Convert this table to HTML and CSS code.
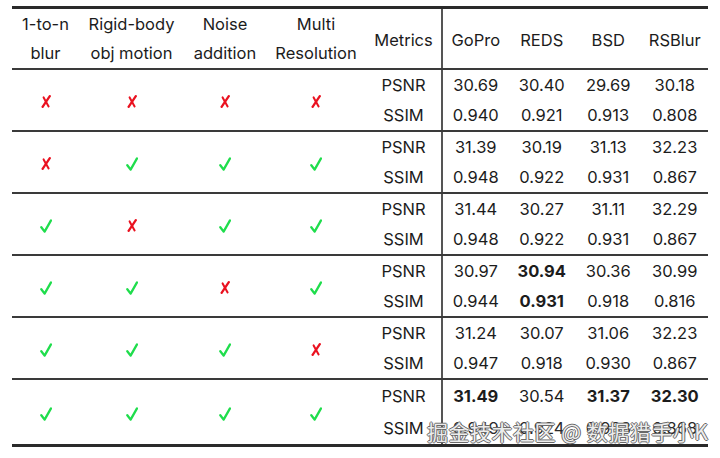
FILE: index.html
```html
<!DOCTYPE html>
<html lang="en">
<head>
<meta charset="utf-8">
<title>Ablation table</title>
<link rel="stylesheet" href="styles.css">
</head>
<body>
<svg class="defs" width="0" height="0" aria-hidden="true">
  <symbol id="yes" viewBox="0 0 12 14">
    <path d="M1.3 8.2 L4.6 12.6 L11 1.4" fill="none" stroke="currentColor" stroke-width="2.3" stroke-linecap="round" stroke-linejoin="round"/>
  </symbol>
  <symbol id="no" viewBox="0 0 10 13">
    <path d="M8.8 1.2 L1.6 11.8" fill="none" stroke="currentColor" stroke-width="2.3" stroke-linecap="round"/>
    <path d="M2.6 2.4 L7.6 11.4" fill="none" stroke="currentColor" stroke-width="2" stroke-linecap="round"/>
  </symbol>
</svg>
<div class="page">
  <table class="results">
    <colgroup>
      <col class="c1"><col class="c2"><col class="c3"><col class="c4"><col class="cm">
      <col class="cd"><col class="cd"><col class="cd"><col class="cd">
    </colgroup>
    <thead>
      <tr class="head">
        <th>1-to-n<br>blur</th>
        <th>Rigid-body<br>obj motion</th>
        <th>Noise<br>addition</th>
        <th>Multi<br>Resolution</th>
        <th class="metric low">Metrics</th>
        <th class="low">GoPro</th><th class="low">REDS</th><th class="low">BSD</th><th class="low">RSBlur</th>
      </tr>
    </thead>
    <tbody>
      <tr class="top">
        <td rowspan="2"><svg class="mark no"><use href="#no"/></svg></td>
        <td rowspan="2"><svg class="mark no"><use href="#no"/></svg></td>
        <td rowspan="2"><svg class="mark no"><use href="#no"/></svg></td>
        <td rowspan="2"><svg class="mark no"><use href="#no"/></svg></td>
        <td class="metric">PSNR</td><td>30.69</td><td>30.40</td><td>29.69</td><td>30.18</td></tr>
      <tr class="bot"><td class="metric">SSIM</td><td>0.940</td><td>0.921</td><td>0.913</td><td>0.808</td></tr>

      <tr class="top">
        <td rowspan="2"><svg class="mark no"><use href="#no"/></svg></td>
        <td rowspan="2"><svg class="mark yes"><use href="#yes"/></svg></td>
        <td rowspan="2"><svg class="mark yes"><use href="#yes"/></svg></td>
        <td rowspan="2"><svg class="mark yes"><use href="#yes"/></svg></td>
        <td class="metric">PSNR</td><td>31.39</td><td>30.19</td><td>31.13</td><td>32.23</td></tr>
      <tr class="bot"><td class="metric">SSIM</td><td>0.948</td><td>0.922</td><td>0.931</td><td>0.867</td></tr>

      <tr class="top">
        <td rowspan="2"><svg class="mark yes"><use href="#yes"/></svg></td>
        <td rowspan="2"><svg class="mark no"><use href="#no"/></svg></td>
        <td rowspan="2"><svg class="mark yes"><use href="#yes"/></svg></td>
        <td rowspan="2"><svg class="mark yes"><use href="#yes"/></svg></td>
        <td class="metric">PSNR</td><td>31.44</td><td>30.27</td><td>31.11</td><td>32.29</td></tr>
      <tr class="bot"><td class="metric">SSIM</td><td>0.948</td><td>0.922</td><td>0.931</td><td>0.867</td></tr>

      <tr class="top">
        <td rowspan="2"><svg class="mark yes"><use href="#yes"/></svg></td>
        <td rowspan="2"><svg class="mark yes"><use href="#yes"/></svg></td>
        <td rowspan="2"><svg class="mark no"><use href="#no"/></svg></td>
        <td rowspan="2"><svg class="mark yes"><use href="#yes"/></svg></td>
        <td class="metric">PSNR</td><td>30.97</td><td class="best">30.94</td><td>30.36</td><td>30.99</td></tr>
      <tr class="bot"><td class="metric">SSIM</td><td>0.944</td><td class="best">0.931</td><td>0.918</td><td>0.816</td></tr>

      <tr class="top">
        <td rowspan="2"><svg class="mark yes"><use href="#yes"/></svg></td>
        <td rowspan="2"><svg class="mark yes"><use href="#yes"/></svg></td>
        <td rowspan="2"><svg class="mark yes"><use href="#yes"/></svg></td>
        <td rowspan="2"><svg class="mark no"><use href="#no"/></svg></td>
        <td class="metric">PSNR</td><td>31.24</td><td>30.07</td><td>31.06</td><td>32.23</td></tr>
      <tr class="bot"><td class="metric">SSIM</td><td>0.947</td><td>0.918</td><td>0.930</td><td>0.867</td></tr>

      <tr class="top last">
        <td rowspan="2"><svg class="mark yes"><use href="#yes"/></svg></td>
        <td rowspan="2"><svg class="mark yes"><use href="#yes"/></svg></td>
        <td rowspan="2"><svg class="mark yes"><use href="#yes"/></svg></td>
        <td rowspan="2"><svg class="mark yes"><use href="#yes"/></svg></td>
        <td class="metric">PSNR</td><td class="best">31.49</td><td>30.54</td><td class="best">31.37</td><td class="best">32.30</td></tr>
      <tr class="bot last"><td class="metric">SSIM</td><td class="hidden">0.949</td><td class="hidden">0.924</td><td class="hidden">0.933</td><td class="hidden">0.868</td></tr>
    </tbody>
  </table>
  <div class="watermark">掘金技术社区 @ 数据猎手小K</div>
</div>
</body>
</html>
```

FILE: styles.css
```css
html, body {
  margin: 0;
  padding: 0;
  background: #ffffff;
}

.defs {
  position: absolute;
  width: 0;
  height: 0;
  overflow: hidden;
}

.page {
  position: relative;
  width: 720px;
  height: 458px;
  padding: 6px 0 0 12px;
  box-sizing: border-box;
  font-family: Inter, "Noto Sans", sans-serif;
  font-size: 16.5px;
  color: #1c1c1c;
}

.results {
  border-collapse: collapse;
  table-layout: fixed;
  width: 696px;
  border-top: 3px solid #2a2a2a;
  border-bottom: 3px solid #2a2a2a;
}

.c1 { width: 67px; }
.c2 { width: 105px; }
.c3 { width: 82px; }
.c4 { width: 100px; }
.cm { width: 76px; }
.cd { width: 66.5px; }

.results th,
.results td {
  padding: 0;
  text-align: center;
  font-weight: 400;
  white-space: nowrap;
}

.head th {
  height: 59px;
  line-height: 29px;
  border-bottom: 2px solid #3a3a3a;
}

.head th.low {
  padding-top: 3px;
  height: 56px;
}

.head th.metric,
.results td.metric {
  border-right: 2px solid #555555;
}

.top td,
.bot td {
  height: 30px;
  line-height: 30px;
}

.bot td,
.top td[rowspan] {
  border-bottom: 2px solid #3a3a3a;
}

.top.last td { height: 32px; }
.bot.last td { height: 32px; border-bottom: 0; }
.top.last td[rowspan] { border-bottom: 0; }

.best {
  font-weight: 700 !important;
}

.hidden {
  color: #2a2a2a;
}

.mark {
  display: inline-block;
  vertical-align: middle;
}

.mark.yes {
  width: 12px;
  height: 14px;
  color: #1fdd4c;
}

.mark.no {
  width: 10px;
  height: 13px;
  color: #ea1220;
}

.watermark {
  position: absolute;
  left: 427px;
  top: 417px;
  font-family: "Noto Sans CJK SC", "Noto Sans", sans-serif;
  font-size: 21px;
  line-height: 28px;
  color: rgba(255, 255, 255, 0.9);
  text-shadow: 1px 0 0 #6a6a6a, -1px 0 0 #6a6a6a, 0 1px 0 #6a6a6a, 0 -1px 0 #6a6a6a;
  white-space: nowrap;
  letter-spacing: 0.5px;
}
```
